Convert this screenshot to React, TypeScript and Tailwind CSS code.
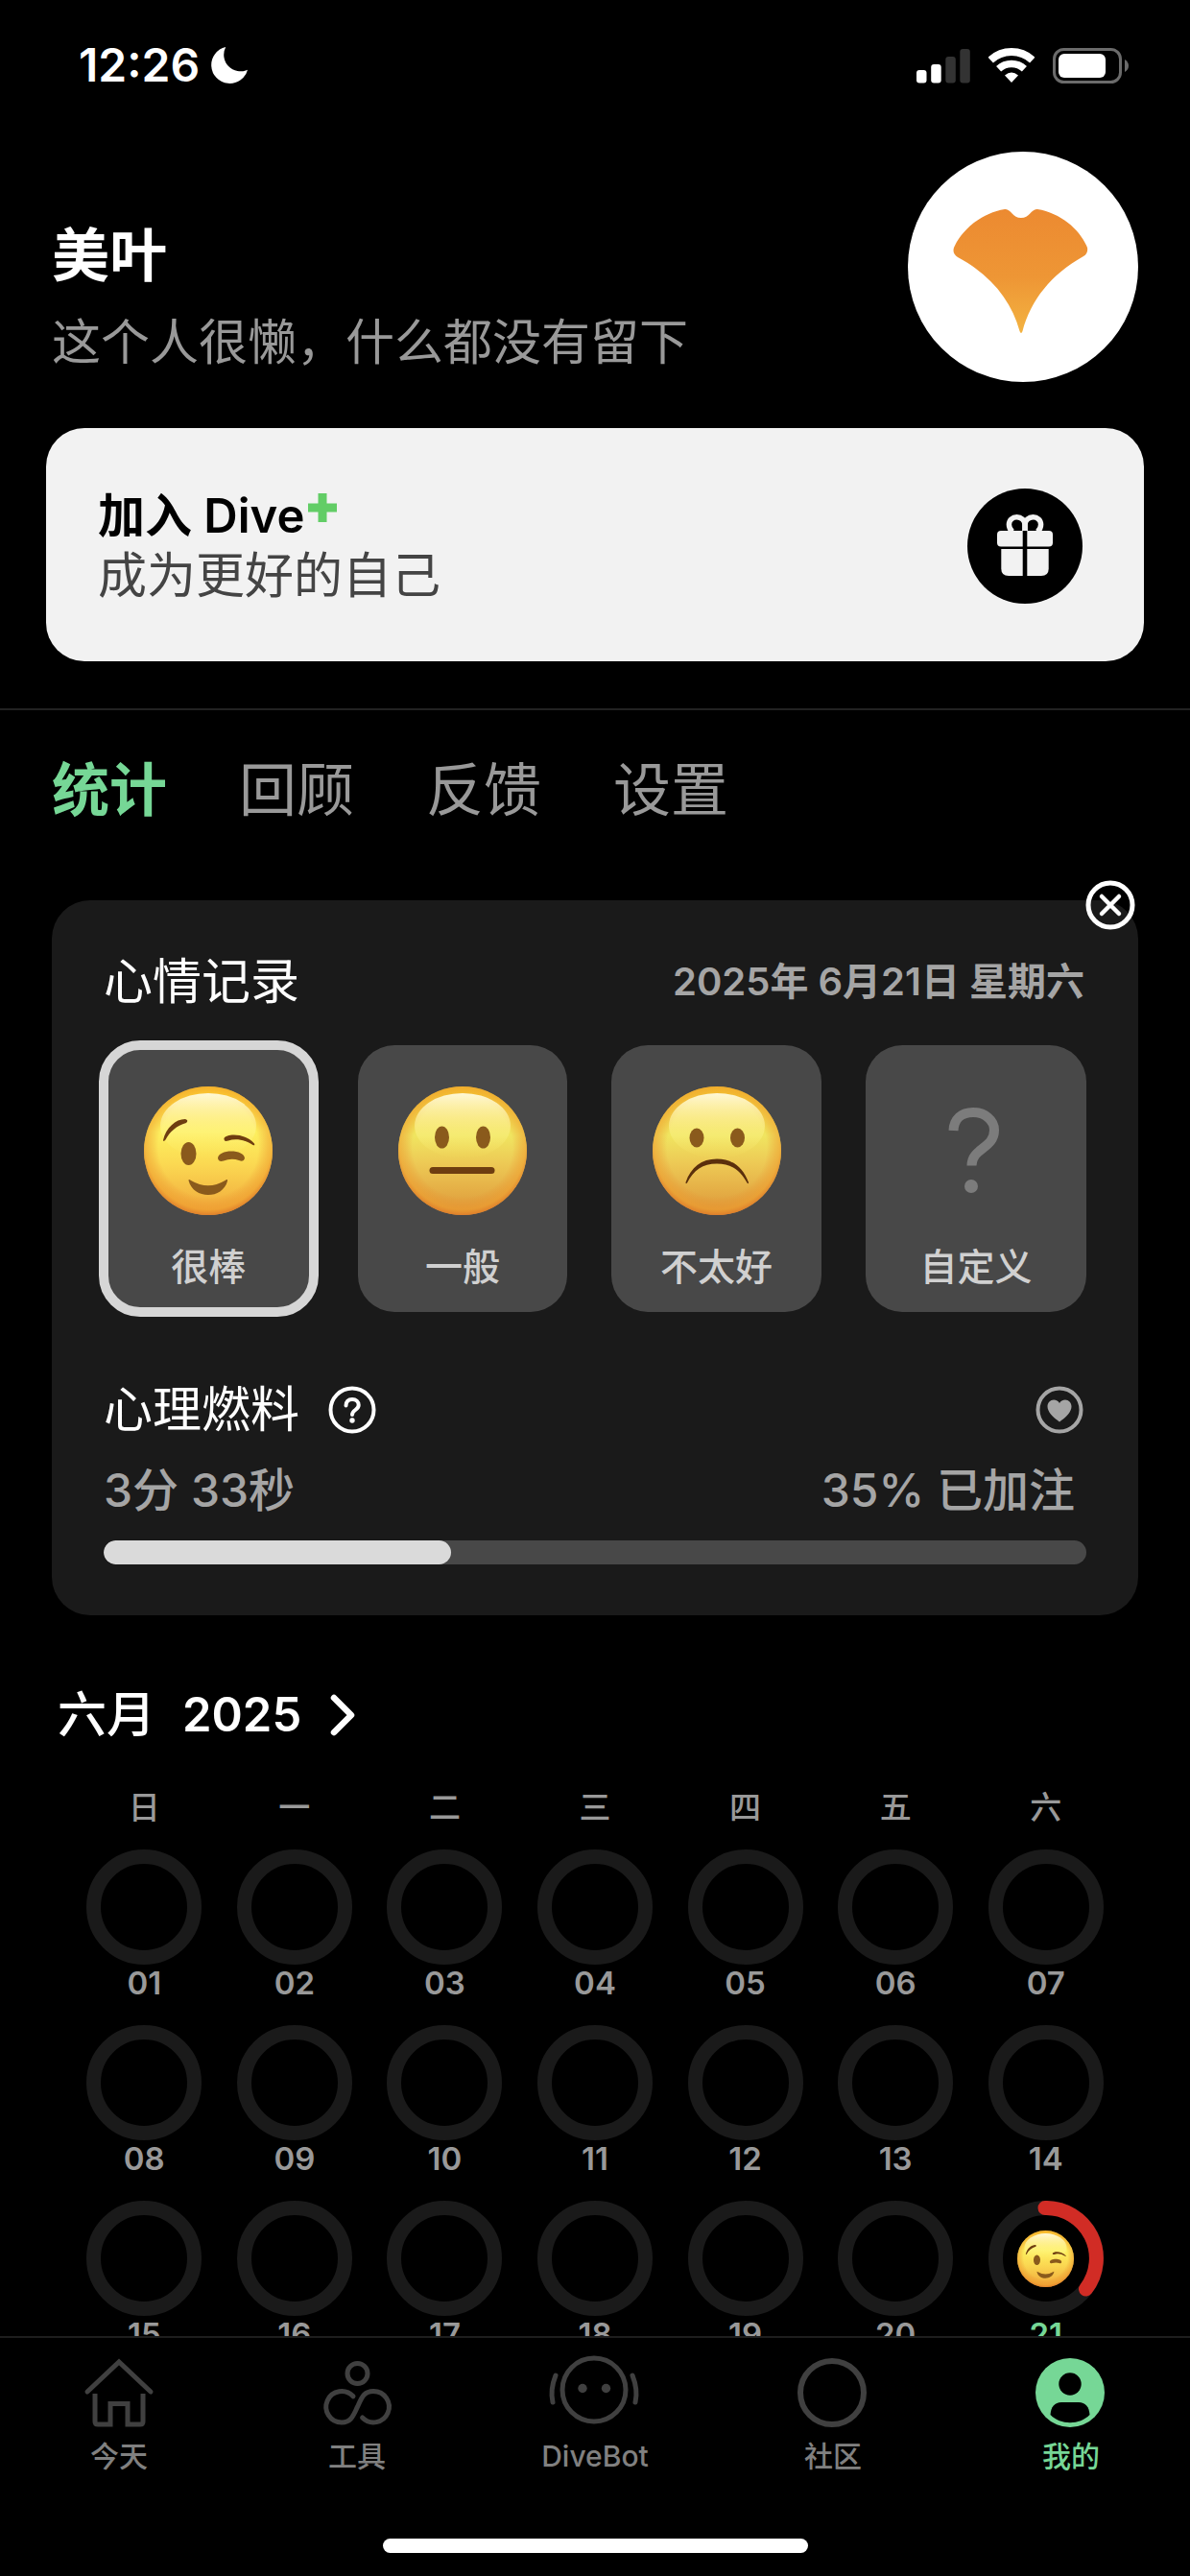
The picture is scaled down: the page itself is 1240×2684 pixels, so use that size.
import { useState } from "react";
import type { ReactNode } from "react";

type Face = "wink" | "neutral" | "sad";

const sections = ["统计", "回顾", "反馈", "设置"];

const moods: { label: string; face?: Face }[] = [
  { label: "很棒", face: "wink" },
  { label: "一般", face: "neutral" },
  { label: "不太好", face: "sad" },
  { label: "自定义" },
];

const weekdays = ["日", "一", "二", "三", "四", "五", "六"];

const days = Array.from({ length: 21 }, (_, i) => ({
  label: String(i + 1).padStart(2, "0"),
  today: i === 20,
}));

const fuel = 35.4;

const navItems = [
  { label: "今天", icon: HomeIcon },
  { label: "工具", icon: ToolsIcon },
  { label: "DiveBot", icon: BotIcon },
  { label: "社区", icon: CommunityIcon },
  { label: "我的", icon: ProfileIcon, active: true },
];

export default function App() {
  return (
    <div className="flex h-screen w-full flex-col overflow-hidden bg-black font-[Inter,'Noto_Sans_CJK_SC',sans-serif] text-white">
      <main className="min-h-0 flex-1 overflow-hidden">
        <StatusBar />
        <ProfileHeader />
        <JoinCard />
        <SectionTabs />
        <MoodCard />
        <Calendar />
      </main>
      <TabBar />
    </div>
  );
}

function StatusBar() {
  return (
    <div className="flex items-center justify-between pt-11 pr-16 pb-[66px] pl-[82px]">
      <div className="flex h-12 items-center gap-3 text-[48px] leading-12 font-semibold">
        12:26
        <svg viewBox="3 3 18 18" className="size-[38px]" fill="#fff" aria-hidden="true">
          <path d="M21 14.2A9.1 9.1 0 1 1 10.2 3 8.2 8.2 0 0 0 21 14.2z" />
        </svg>
      </div>
      <div className="flex items-center gap-[19px]">
        <svg width="56" height="37" viewBox="0 0 56 37" aria-hidden="true">
          <rect x="0" y="23" width="10.5" height="13.5" rx="3" fill="#fff" />
          <rect x="15.2" y="17" width="10.5" height="19.5" rx="3" fill="#fff" />
          <rect x="30.3" y="9" width="10.5" height="27.5" rx="3" fill="#333" />
          <rect x="45.3" y="1" width="10.5" height="35.5" rx="3" fill="#333" />
        </svg>
        <svg width="48" height="37" viewBox="0 0 48 37" fill="none" stroke="#fff" aria-hidden="true">
          <path d="M2.2 12.6A32 32 0 0 1 45.8 12.6" strokeWidth="8" />
          <path d="M10.6 21.8A19.6 19.6 0 0 1 37.4 21.8" strokeWidth="7.4" />
          <path d="M17 28.6Q24 22.4 31 28.6L24 36Z" fill="#fff" stroke="none" />
        </svg>
        <svg width="79" height="37" viewBox="0 0 79 37" aria-hidden="true">
          <rect x="1.5" y="1.5" width="69" height="34" rx="10" fill="none" stroke="#6b6b6b" strokeWidth="3" />
          <rect x="6" y="6" width="49" height="25" rx="6" fill="#fff" />
          <path d="M75 12Q79 14.5 79 18.5T75 25Z" fill="#6b6b6b" />
        </svg>
      </div>
    </div>
  );
}

function ProfileHeader() {
  return (
    <header className="flex items-start justify-between px-[54px]">
      <div className="flex flex-col gap-7 pt-[71px]">
        <h1 className="text-[60px] leading-[74px] font-semibold">美叶</h1>
        <p className="text-[51px] leading-[52px] text-[#999]">这个人很懒，什么都没有留下</p>
      </div>
      <svg viewBox="0 0 240 240" className="size-60 shrink-0" role="img" aria-label="头像">
        <defs>
          <linearGradient id="leaf" x1="0" y1="0" x2="0" y2="1">
            <stop offset="0" stopColor="#ec8a31" />
            <stop offset="0.55" stopColor="#ee9635" />
            <stop offset="1" stopColor="#f3b341" />
          </linearGradient>
        </defs>
        <circle cx="120" cy="120" r="120" fill="#fff" />
        <path
          d="M101 60C107 59 109 69 118 69S129 59 135 60C160 64 180 82 187 100Q188 106 183 109C149 128 128 155 119.5 187Q118 191 116.5 187C108 155 86 128 52 110Q46 106 48 100C56 82 76 64 101 60Z"
          fill="url(#leaf)"
        />
      </svg>
    </header>
  );
}

function JoinCard() {
  return (
    <section className="border-b-2 border-[#222] px-12 pt-12 pb-[49px]">
      <a
        href="#join"
        className="flex items-center justify-between rounded-[40px] bg-[#f2f2f2] pt-[62px] pr-16 pb-[59px] pl-[54px]"
      >
        <div>
          <div className="flex h-[60px] items-center text-[49px] leading-[60px] font-semibold text-black">
            加入 Dive
            <svg viewBox="0 0 30 30" className="mt-1.5 ml-1 size-[30px] self-start" fill="#62cd66" aria-label="+">
              <path d="M10.5 0h9v10.5H30v9H19.5V30h-9V19.5H0v-9h10.5z" />
            </svg>
          </div>
          <p className="mt-0.5 text-[51px] leading-[60px] text-[#444]">成为更好的自己</p>
        </div>
        <GiftIcon />
      </a>
    </section>
  );
}

function GiftIcon() {
  return (
    <svg viewBox="0 0 120 120" className="size-30 shrink-0" aria-hidden="true">
      <circle cx="60" cy="60" r="60" fill="#000" />
      <g fill="none" stroke="#f2f2f2" strokeWidth="5.5">
        <path d="M60 44V38C60 33 56 29.7 51.5 29.7S43.4 33 43.4 37.5Q43.4 42 47 45" />
        <path d="M60 44V38C60 33 64 29.7 68.5 29.7S76.6 33 76.6 37.5Q76.6 42 73 45" />
      </g>
      <g fill="#f2f2f2">
        <path d="M35 44H57.7V60.5H35Q31 60.5 31 56.5V48Q31 44 35 44Z" />
        <path d="M62.3 44H85Q89 44 89 48V56.5Q89 60.5 85 60.5H62.3Z" />
        <path d="M35.3 63H57.7V91H43Q35.3 91 35.3 83.5Z" />
        <path d="M62.3 63H84.7V83.5Q84.7 91 77 91H62.3Z" />
      </g>
    </svg>
  );
}

function SectionTabs() {
  const [current, setCurrent] = useState(sections[0]);

  return (
    <div role="tablist" className="flex gap-[75px] px-[54px] pt-[43px]">
      {sections.map((name) => (
        <button
          key={name}
          type="button"
          role="tab"
          aria-selected={name === current}
          onClick={() => setCurrent(name)}
          className={`text-[60px] leading-20 ${
            name === current ? "font-semibold text-[#76d796]" : "text-[#999]"
          }`}
        >
          {name}
        </button>
      ))}
    </div>
  );
}

function MoodCard() {
  const [mood, setMood] = useState(moods[0].label);

  return (
    <section className="relative mx-[54px] mt-[75px] rounded-[40px] bg-[#1a1a1a] px-[54px] pt-[55px] pb-[53px]">
      <button type="button" aria-label="关闭" className="absolute -top-[21px] right-[3px]">
        <svg viewBox="0 0 52 52" className="size-[52px]" fill="none" stroke="#fff" strokeWidth="5" strokeLinecap="round">
          <circle cx="26" cy="26" r="23" />
          <path d="M17 17L35 35M35 17L17 35" strokeWidth="4.5" />
        </svg>
      </button>

      <div className="flex items-center justify-between leading-[60px]">
        <h2 className="text-[51px]">心情记录</h2>
        <p className="pr-0.5 text-[40px] font-semibold text-[#a5a5a5]">2025年 6月21日 星期六</p>
      </div>

      <div className="mt-9 grid grid-cols-[19fr_19fr_19fr_20fr] gap-[46px]">
        {moods.map((item) => (
          <button
            key={item.label}
            type="button"
            aria-pressed={item.label === mood}
            onClick={() => setMood(item.label)}
            className={`flex flex-col items-center rounded-[38px] bg-[#484848] pt-[43px] pb-[17px] ${
              item.label === mood ? "outline-10 -outline-offset-5 outline-[#d6d6d6]" : ""
            }`}
          >
            {item.face ? <Emoji face={item.face} className="size-[134px]" /> : <QuestionMark />}
            <span className="mt-6 text-[39px] leading-[60px] font-medium text-[#d0d0d0]">
              {item.label}
            </span>
          </button>
        ))}
      </div>

      <div className="mt-[72px] flex items-center justify-between">
        <div className="flex items-center gap-[30px]">
          <h2 className="text-[51px] leading-[60px]">心理燃料</h2>
          <button type="button" aria-label="说明">
            <svg viewBox="0 0 50 50" className="size-[50px]" fill="none" stroke="#fff" strokeWidth="4" strokeLinecap="round">
              <circle cx="25" cy="25" r="22.5" />
              <path d="M18.5 20.5C18.5 16.5 21 14 25 14S31.7 16.5 31.7 20C31.7 25 25 25 25 30" />
              <circle cx="25" cy="36" r="2.7" fill="#fff" stroke="none" />
            </svg>
          </button>
        </div>
        <svg viewBox="0 0 50 50" className="mr-[3px] size-[50px]" aria-hidden="true">
          <circle cx="25" cy="25" r="22.5" fill="none" stroke="#a5a5a5" strokeWidth="4" />
          <path
            d="M25 37.5C18 32.5 12.5 27 12.5 21.5C12.5 17.5 15.5 14.5 19 14.5C21.5 14.5 24 16 25 18C26 16 28.5 14.5 31 14.5C34.5 14.5 37.5 17.5 37.5 21.5C37.5 27 32 32.5 25 37.5Z"
            fill="#a5a5a5"
          />
        </svg>
      </div>

      <div className="mt-6 flex justify-between pr-3 text-[48px] leading-[60px] font-medium text-[#a5a5a5]">
        <span>3分 33秒</span>
        <span>35% 已加注</span>
      </div>

      <div
        role="progressbar"
        aria-label="心理燃料"
        aria-valuenow={fuel}
        className="mt-[22px] h-[25px] overflow-hidden rounded-full bg-[#484848]"
      >
        <div className="h-full rounded-full bg-[#dadada]" style={{ width: `${fuel}%` }} />
      </div>
    </section>
  );
}

function Emoji({ face, className }: { face: Face; className: string }) {
  return (
    <svg viewBox="0 0 134 134" className={className} aria-hidden="true">
      <defs>
        <linearGradient id="skin" x1="0" y1="0" x2="0" y2="1">
          <stop offset="0" stopColor="#fdc92c" />
          <stop offset="0.35" stopColor="#fdf05f" />
          <stop offset="0.6" stopColor="#fbd952" />
          <stop offset="1" stopColor="#f0a63a" />
        </linearGradient>
        <linearGradient id="skin-dim" x1="0" y1="0" x2="0" y2="1">
          <stop offset="0" stopColor="#f5c02c" />
          <stop offset="0.38" stopColor="#f0e560" />
          <stop offset="0.6" stopColor="#edc955" />
          <stop offset="1" stopColor="#dd9638" />
        </linearGradient>
        <radialGradient id="rim" cx="0.5" cy="0.47" r="0.54">
          <stop offset="0.72" stopColor="#e8862a" stopOpacity="0" />
          <stop offset="0.9" stopColor="#ee9a2c" stopOpacity="0.55" />
          <stop offset="1" stopColor="#d9742a" />
        </radialGradient>
        <linearGradient id="shine" x1="0" y1="0" x2="0" y2="1">
          <stop offset="0" stopColor="#fffbe0" stopOpacity="0.95" />
          <stop offset="1" stopColor="#fff46a" stopOpacity="0" />
        </linearGradient>
      </defs>
      <circle cx="67" cy="67" r="67" fill={face === "wink" ? "url(#skin)" : "url(#skin-dim)"} />
      <circle cx="67" cy="67" r="67" fill="url(#rim)" />
      <ellipse cx="67" cy="41" rx="50" ry="34" fill="url(#shine)" />
      {face === "wink" && (
        <g fill="#8a5a1c">
          <path
            d="M20 56C23 43 33 34 43 34Q47 35 44 38C34 41 27 47 22.5 55.5Q20.5 58 20 56Z"
            fill="#6e3d10"
          />
          <path d="M83.5 54C86 49 105 48 115 59.5Q116 62 113.5 61C104 55 95 54 88 56.5Q83 58 83.5 54Z" fill="#6e3d10" />
          <ellipse cx="46.5" cy="70" rx="8" ry="12" />
          <path d="M77 75C77 65 105 65 105 75Q104 79 99 77Q91 74.5 83 77.5Q78 79 77 75Z" />
          <path d="M46.5 98Q46.5 96 49 98Q67 108.5 84.5 98Q87.5 96 87 98.5C82 118 51.5 118 46.5 98Z" />
        </g>
      )}
      {face === "neutral" && (
        <g fill="#8a5a1c">
          <ellipse cx="45.5" cy="53" rx="7.5" ry="11.5" />
          <ellipse cx="88.5" cy="53" rx="7.5" ry="11.5" />
          <rect x="32.5" y="84" width="68" height="7" rx="3.5" fill="#6e3d10" />
        </g>
      )}
      {face === "sad" && (
        <g fill="#8a5a1c">
          <ellipse cx="46" cy="53.5" rx="7.5" ry="10" />
          <ellipse cx="88.5" cy="53.5" rx="7.5" ry="10" />
          <path
            d="M34.5 100C40 84 51 75.5 67 75.5S94 84 100 100Q100 102 98.5 100.5C91 87 82 80.5 67 80.5S43 87 36 100.5Q34.5 102 34.5 100Z"
            fill="#5a2f0c"
          />
        </g>
      )}
    </svg>
  );
}

function QuestionMark() {
  return (
    <svg viewBox="0 0 134 134" className="size-[134px]" fill="none" stroke="#7c7c7c" strokeWidth="10" aria-hidden="true">
      <path d="M43.5 46C44 34 52 27 64 27S86 35 86 45.5C86 65 62.5 64 62.5 82.5" />
      <circle cx="62" cy="104" r="7" fill="#7c7c7c" stroke="none" />
    </svg>
  );
}

function Calendar() {
  return (
    <section className="px-[54px] pt-[74px]">
      <button type="button" className="flex items-center gap-7 px-1.5 text-[49px] leading-[60px] font-semibold">
        <span className="text-[51px] font-medium">六月</span>
        2025
        <svg viewBox="0 0 26 44" className="ml-0.5 h-11 w-[26px]" fill="none" stroke="#fff" strokeWidth="6.5" strokeLinecap="round" strokeLinejoin="round" aria-hidden="true">
          <path d="M4 4L22 22L4 40" />
        </svg>
      </button>

      <div className="mx-[18px] mt-[46px] grid grid-cols-7 text-center">
        {weekdays.map((name) => (
          <div key={name} className="text-[33px] leading-10 font-medium text-[#999]">
            {name}
          </div>
        ))}
      </div>

      <div className="mx-[18px] mt-6 grid grid-cols-7 justify-items-center gap-y-[25px]">
        {days.map((day) => (
          <button key={day.label} type="button" className="flex flex-col items-center">
            <span className="flex size-30 items-center justify-center">
              <DayRing today={day.today} />
            </span>
            <span
              className={`text-[33px] leading-[38px] font-semibold ${day.today ? "text-[#76d796]" : "text-[#999]"}`}
            >
              {day.label}
            </span>
          </button>
        ))}
      </div>
    </section>
  );
}

function DayRing({ today }: { today: boolean }) {
  if (!today) {
    return <span className="size-30 rounded-full border-15 border-[#1a1a1a]" />;
  }

  return (
    <span className="relative flex size-30 items-center justify-center">
      <svg viewBox="0 0 120 120" className="absolute inset-0 size-30" fill="none" strokeWidth="15" aria-hidden="true">
        <circle cx="60" cy="60" r="52.5" stroke="#1a1a1a" />
        <path d="M59 7.5A52.5 52.5 0 0 1 101.5 92" stroke="#d12c25" strokeLinecap="round" />
      </svg>
      <Emoji face="wink" className="size-[59px]" />
    </span>
  );
}

function TabBar() {
  return (
    <nav className="shrink-0 border-t-2 border-[#1e1e1e]">
      <div className="grid grid-cols-5 pt-[17px]">
        {navItems.map((item) => (
          <a
            key={item.label}
            href={`#${item.label}`}
            aria-current={item.active ? "page" : undefined}
            className={`flex flex-col items-center gap-1.5 text-[30px] leading-10 font-medium ${
              item.active ? "text-[#76d796]" : "text-[#808080]"
            }`}
          >
            <item.icon />
            {item.label}
          </a>
        ))}
      </div>
      <div className="mx-auto mt-[66px] mb-6 h-[15px] w-[443px] rounded-full bg-white" />
    </nav>
  );
}

function NavIcon({ children }: { children: ReactNode }) {
  return (
    <svg viewBox="0 0 100 80" className="h-20 w-25" fill="none" stroke="#404040" strokeWidth="5" strokeLinecap="round" aria-hidden="true">
      {children}
    </svg>
  );
}

function HomeIcon() {
  return (
    <NavIcon>
      <path d="M17 39L50 8L83 39" />
      <path d="M25 41V70Q25 73 28 73H41V51.5H59V73H72Q75 73 75 70V41" strokeLinecap="butt" />
    </NavIcon>
  );
}

function ToolsIcon() {
  return (
    <NavIcon>
      <circle cx="50.5" cy="20" r="10.5" />
      <path d="M46 43.8A16.2 16.2 0 1 0 34 70.9C44 71 46 64 50.5 54.7C55 45 57 38.5 67 38.5A16.2 16.2 0 1 1 55.6 66" />
    </NavIcon>
  );
}

function BotIcon() {
  return (
    <NavIcon>
      <circle cx="49" cy="37" r="33" />
      <circle cx="37" cy="35.5" r="4.7" fill="#404040" stroke="none" />
      <circle cx="61.5" cy="35.5" r="4.7" fill="#404040" stroke="none" />
      <path d="M9 22Q3 37 6 50M89 22Q95 37 92 50" />
    </NavIcon>
  );
}

function CommunityIcon() {
  return (
    <NavIcon>
      <circle cx="49" cy="40" r="33" strokeWidth="6" />
    </NavIcon>
  );
}

function ProfileIcon() {
  return (
    <NavIcon>
      <g stroke="none">
        <circle cx="49" cy="40" r="36" fill="#76d796" />
        <circle cx="49" cy="31" r="11.7" fill="#000" />
        <path d="M28.5 63C29 55 33 50 40 50H58C65 50 69 55 69.5 63C59 74 39 74 28.5 63Z" fill="#000" />
      </g>
    </NavIcon>
  );
}
